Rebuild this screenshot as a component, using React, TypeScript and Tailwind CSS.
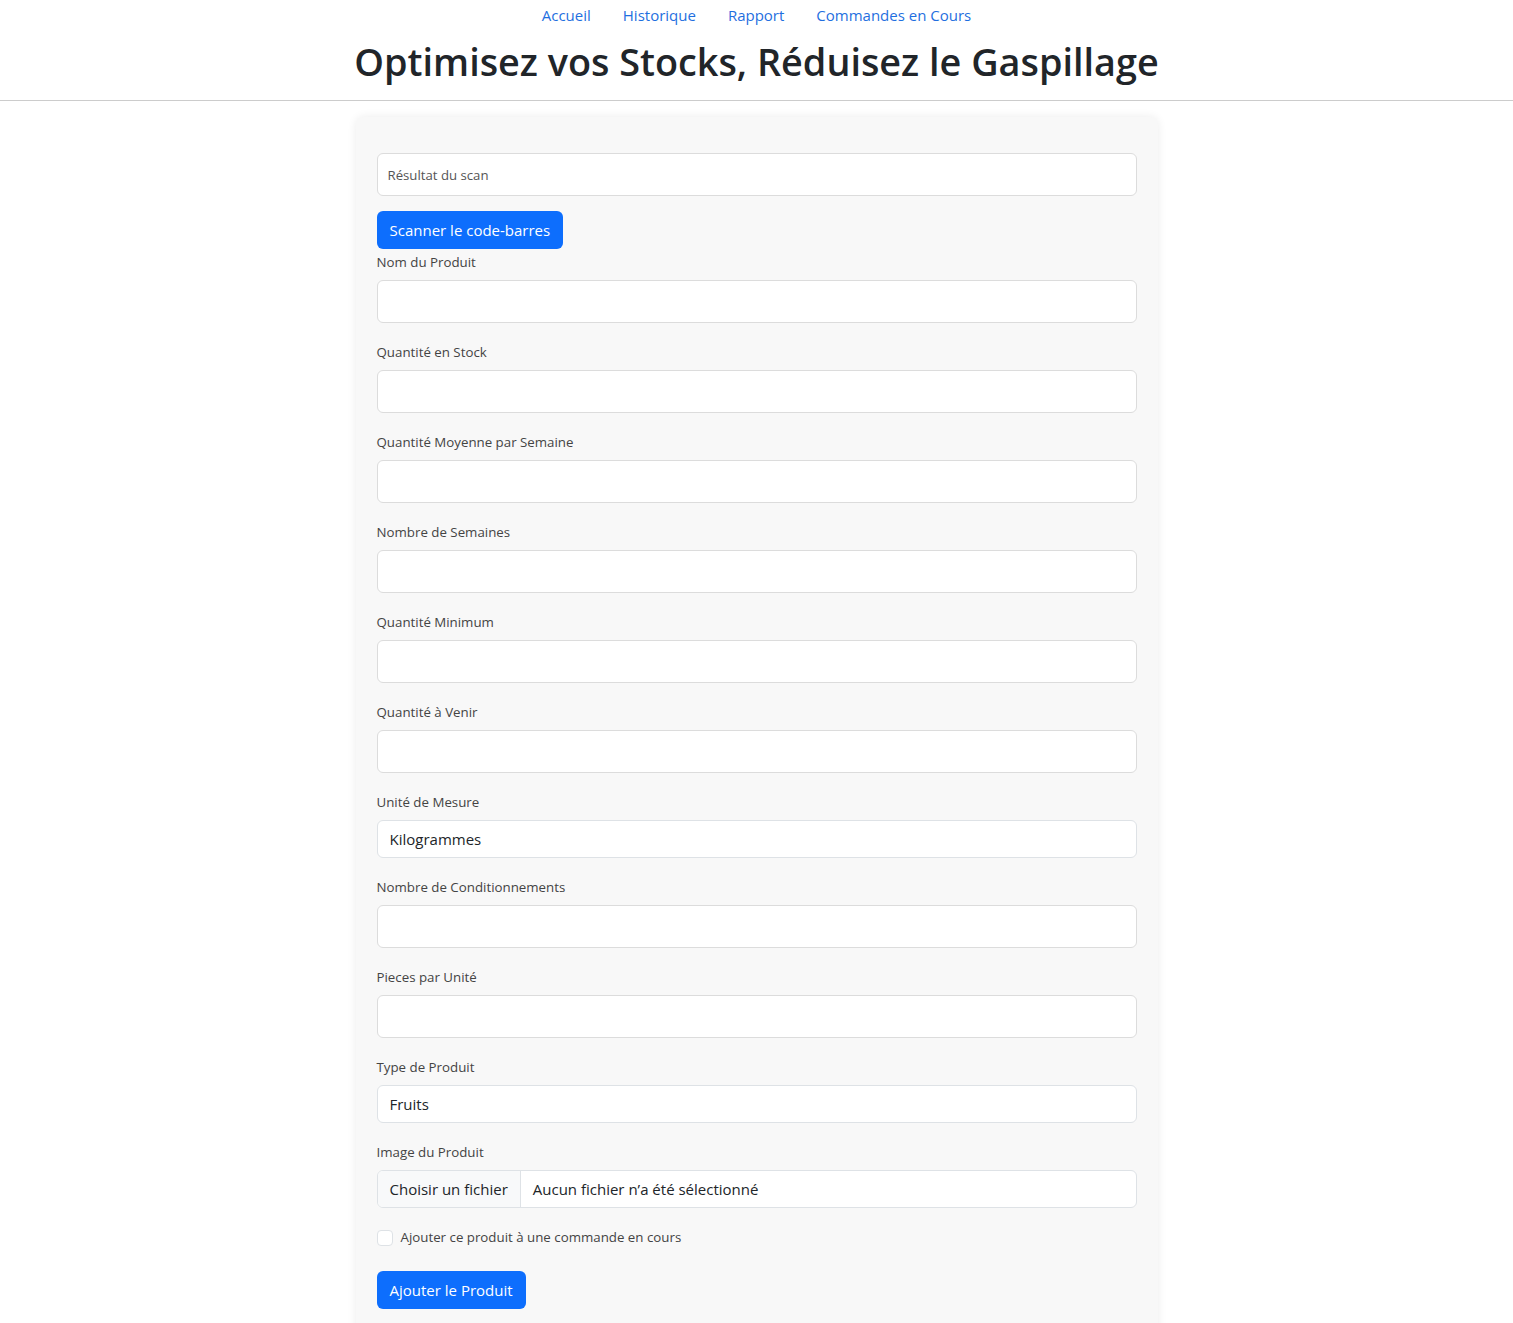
import { useState } from "react";

const fields = [
  { id: "nom", label: "Nom du Produit" },
  { id: "stock", label: "Quantité en Stock" },
  { id: "moyenne", label: "Quantité Moyenne par Semaine" },
  { id: "semaines", label: "Nombre de Semaines" },
  { id: "minimum", label: "Quantité Minimum" },
  { id: "avenir", label: "Quantité à Venir" },
];

const inputCls =
  "block w-full h-[43px] rounded-md border border-[#dcdcdc] bg-white px-3 text-[15px] text-[#212529] outline-none";
const selectCls =
  "block w-full h-[38px] rounded-md border border-[#dee2e6] bg-white px-3 text-[15px] text-[#212529] outline-none appearance-none";
const labelCls = "block mb-2 text-[13.3px] leading-[19px] text-[#444]";

function Field({ label, children }: { label: string; children: React.ReactNode }) {
  return (
    <div className="mb-5">
      <label className={labelCls}>{label}</label>
      {children}
    </div>
  );
}

export default function App() {
  const [checked, setChecked] = useState(false);

  return (
    <div className="min-h-screen bg-white" style={{ fontFamily: '"Open Sans", "Noto Sans", sans-serif' }}>
      <header className="border-b border-[#cccccc] pb-[14px] text-center">
        <nav className="flex justify-center gap-8 pt-[3px] text-[15px] leading-6">
          {["Accueil", "Historique", "Rapport", "Commandes en Cours"].map((l) => (
            <a key={l} href="#" className="text-[#1f6fe0]">
              {l}
            </a>
          ))}
        </nav>
        <h1 className="mt-[11px] text-[37.8px] font-semibold leading-[48px] text-[#212529]">
          Optimisez vos Stocks, Réduisez le Gaspillage
        </h1>
      </header>

      <main className="pt-[16px]">
        <div className="mx-auto w-[802px] rounded-lg bg-[#f8f8f8] px-[21px] pt-9 pb-8 shadow-[0_0_10px_rgba(0,0,0,0.08)]">
          <input
            className="block w-full h-[43px] rounded-md border border-[#dcdcdc] bg-white px-[10px] text-[13.2px] text-[#212529] placeholder:text-[#555] outline-none"
            placeholder="Résultat du scan"
          />
          <button
            type="button"
            className="mt-[15px] h-[38px] rounded-md bg-[#0d6efd] px-[13px] text-[15px] text-white"
          >
            Scanner le code-barres
          </button>

          <div className="mt-[4px]">
            {fields.map((f) => (
              <Field key={f.id} label={f.label}>
                <input className={inputCls} />
              </Field>
            ))}

            <Field label="Unité de Mesure">
              <select className={selectCls} defaultValue="kg">
                <option value="kg">Kilogrammes</option>
                <option value="l">Litres</option>
                <option value="u">Unités</option>
              </select>
            </Field>

            <Field label="Nombre de Conditionnements">
              <input className={inputCls} />
            </Field>

            <Field label="Pieces par Unité">
              <input className={inputCls} />
            </Field>

            <Field label="Type de Produit">
              <select className={selectCls} defaultValue="fruits">
                <option value="fruits">Fruits</option>
                <option value="legumes">Légumes</option>
              </select>
            </Field>

            <Field label="Image du Produit">
              <div className="flex h-[38px] w-full overflow-hidden rounded-md border border-[#dee2e6] bg-white text-[15px] text-[#212529]">
                <span className="flex items-center border-r border-[#dee2e6] bg-[#f8f9fa] px-3">
                  Choisir un fichier
                </span>
                <span className="flex items-center px-3">Aucun fichier n’a été sélectionné</span>
              </div>
            </Field>
          </div>

          <label className="flex items-center gap-2 text-[13.3px] text-[#444]">
            <input
              type="checkbox"
              checked={checked}
              onChange={() => setChecked(!checked)}
              className="h-4 w-4 appearance-none rounded border border-[#dee2e6] bg-white"
            />
            Ajouter ce produit à une commande en cours
          </label>

          <button
            type="button"
            className="mt-[23px] h-[38px] rounded-md bg-[#0d6efd] px-[13px] text-[15px] text-white"
          >
            Ajouter le Produit
          </button>
        </div>
      </main>
    </div>
  );
}
